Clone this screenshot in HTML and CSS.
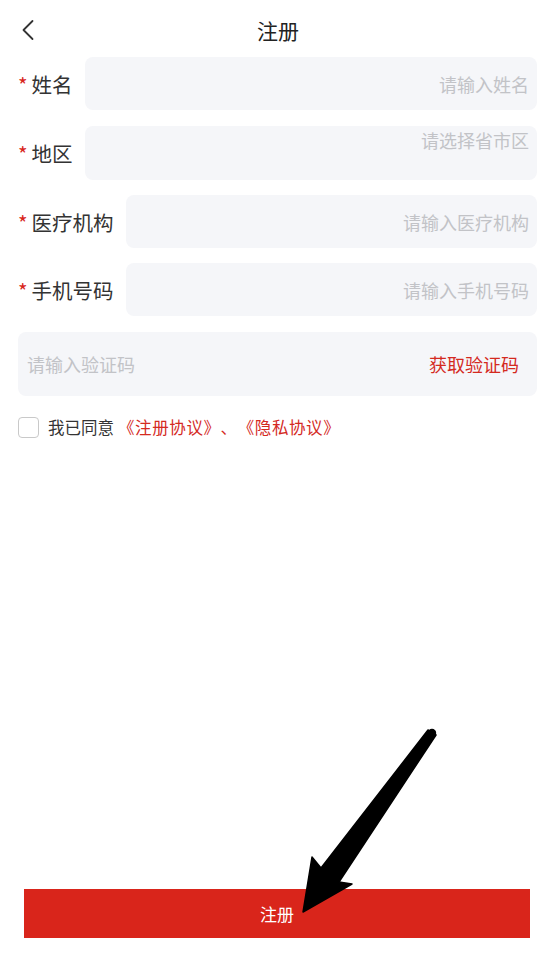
FILE: index.html
```html
<!DOCTYPE html>
<html lang="zh-CN">
<head>
<meta charset="utf-8">
<title>注册</title>
<link rel="stylesheet" href="styles.css">
</head>
<body>
<div class="page">
  <header class="header">
    <span class="back">
      <svg width="14" height="22" viewBox="0 0 14 22"><path d="M11.5 2 L2.5 11 L11.5 20" fill="none" stroke="#333" stroke-width="1.8" stroke-linecap="round" stroke-linejoin="round"/></svg>
    </span>
    <h1 class="title">注册</h1>
  </header>

  <div class="form">
    <div class="row">
      <label class="label"><span class="star">*</span>姓名</label>
      <input class="field" type="text" placeholder="请输入姓名">
    </div>
    <div class="row">
      <label class="label"><span class="star">*</span>地区</label>
      <textarea class="field area" readonly placeholder="请选择省市区"></textarea>
    </div>
    <div class="row">
      <label class="label"><span class="star">*</span>医疗机构</label>
      <input class="field" type="text" placeholder="请输入医疗机构">
    </div>
    <div class="row">
      <label class="label"><span class="star">*</span>手机号码</label>
      <input class="field" type="text" placeholder="请输入手机号码">
    </div>
    <div class="code-box">
      <input class="code-input" type="text" placeholder="请输入验证码">
      <span class="code-btn">获取验证码</span>
    </div>
    <div class="agree">
      <span class="checkbox"></span>
      <span class="agree-text">我已同意<span class="link">《注册协议》、《隐私协议》</span></span>
    </div>
  </div>

  <button class="submit">注册</button>

  <svg class="arrow" width="554" height="957" viewBox="0 0 554 957">
    <polygon points="428,730 436,735 339,882 352,884 303,912 312,857 321,868" fill="#000" stroke="#000" stroke-width="1.5" stroke-linejoin="round"/>
    <circle cx="432" cy="733" r="4.2" fill="#000"/>
  </svg>
</div>
</body>
</html>
```

FILE: styles.css
```css
* {
  box-sizing: border-box;
}

html, body {
  margin: 0;
  padding: 0;
  background: #ffffff;
}

body {
  font-family: "Noto Sans CJK SC", "Noto Sans", sans-serif;
  color: #333333;
  text-spacing-trim: space-all;
}

.page {
  position: relative;
  width: 554px;
  height: 957px;
  display: flex;
  flex-direction: column;
  overflow: hidden;
}

.header {
  height: 57px;
  display: flex;
  align-items: center;
  justify-content: center;
  position: relative;
}

.back {
  position: absolute;
  left: 21px;
  top: 19px;
  width: 14px;
  height: 22px;
  display: flex;
}

.title {
  margin: 0;
  font-size: 21px;
  font-weight: normal;
  color: #222222;
  line-height: 28px;
  padding-left: 2px;
  padding-top: 2px;
}

.form {
  padding: 0 17px 0 18px;
  display: flex;
  flex-direction: column;
}

.row {
  display: flex;
  align-items: center;
  margin-bottom: 15px;
}

.row:first-child {
  margin-bottom: 16px;
}

.label {
  font-size: 20.5px;
  color: #333333;
  margin-right: 12px;
  white-space: nowrap;
  line-height: 28px;
}

.star {
  color: #d8261c;
  margin-right: 4px;
}

.field {
  flex: 1;
  height: 53px;
  border: none;
  outline: none;
  background: #f5f6f9;
  border-radius: 8px;
  font-family: inherit;
  font-size: 18px;
  color: #333333;
  text-align: right;
  padding: 0 8px;
  margin: 0;
}

.row:nth-child(2) .field {
  height: 54px;
}

.field::placeholder,
.code-input::placeholder {
  color: #c2c3c7;
}

.area {
  resize: none;
  padding-top: 2px;
  line-height: 24px;
  overflow: hidden;
  display: block;
}

.code-box {
  height: 64px;
  background: #f5f6f9;
  border-radius: 8px;
  display: flex;
  align-items: center;
  padding: 0 18px 0 9px;
  margin-top: 1px;
}

.code-input {
  flex: 1;
  min-width: 0;
  border: none;
  outline: none;
  background: transparent;
  font-family: inherit;
  font-size: 18px;
  padding: 0;
  color: #333333;
}

.code-btn {
  font-size: 18px;
  color: #d42a1f;
  white-space: nowrap;
}

.agree {
  display: flex;
  align-items: center;
  margin-top: 20px;
}

.checkbox {
  width: 21px;
  height: 21px;
  border: 1.5px solid #c9c9c9;
  border-radius: 4px;
  margin-right: 9px;
  background: #ffffff;
}

.agree-text {
  font-size: 16.5px;
  color: #333333;
  line-height: 22px;
}

.link {
  color: #d42a1f;
  font-size: 16.5px;
  margin-left: 4px;
  letter-spacing: 0.6px;
}

.submit {
  margin: auto 24px 19px 24px;
  height: 49px;
  border: none;
  border-radius: 0;
  background: #d9251b;
  color: #ffffff;
  font-family: inherit;
  font-size: 17px;
  padding: 0;
}

.arrow {
  position: absolute;
  left: 0;
  top: 0;
  pointer-events: none;
}
```
